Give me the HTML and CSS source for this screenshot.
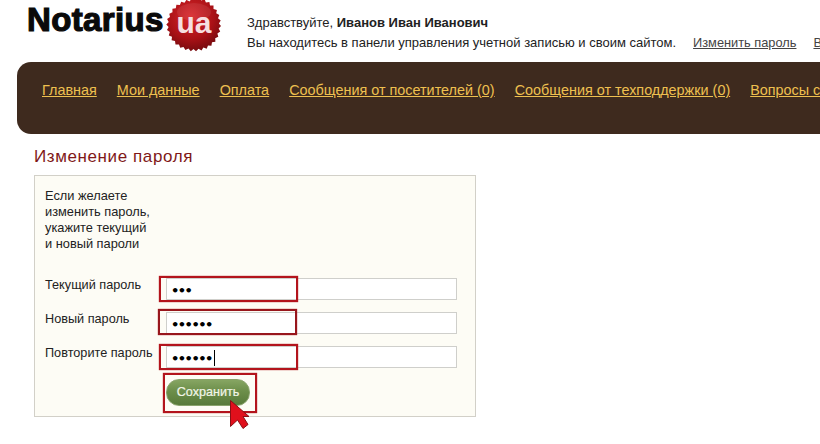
FILE: index.html
```html
<!DOCTYPE html>
<html lang="ru">
<head>
<meta charset="utf-8">
<title>Изменение пароля</title>
<link rel="stylesheet" href="styles.css">
</head>
<body>
<header class="top">
  <div class="logo">
    <span class="logo-word">Notarius</span>
    <div class="badge">
      <svg width="56" height="56" viewBox="0 0 56 56">
        <defs>
          <radialGradient id="seal" cx="45%" cy="35%" r="70%">
            <stop offset="0" stop-color="#d8262a"/>
            <stop offset="0.6" stop-color="#a91116"/>
            <stop offset="1" stop-color="#6d0a0e"/>
          </radialGradient>
        </defs>
        <polygon fill="url(#seal)" points="28,0 30.5,2.6 33.4,.5 35.3,3.5 38.6,2.2 39.9,5.5 43.4,4.9 44,8.4 47.5,8.5 47.5,12 50.9,12.9 50.2,16.3 53.3,17.9 52,21.2 54.7,23.4 52.9,26.4 55,29 52.6,31.4 54.2,34.4 51.4,36.4 52.3,39.8 49.2,41.2 49.4,44.7 46,45.3 45.4,48.8 42,48.5 40.7,51.7 37.4,50.6 35.5,53.5 32.5,51.8 30,54.3 27.5,52 24.8,54.2 22.5,51.4 19.4,52.9 17.5,50 14.2,50.8 13,47.5 9.5,47.5 9,44 5.6,43.3 6,39.8 2.8,38.4 3.8,35 1,33 2.6,30 .3,27.5 2.7,25 1.1,22 4,20 3.3,16.7 6.5,15.3 6.4,11.8 9.8,11.2 10.4,7.7 13.9,8 15.2,4.7 18.5,5.8 20.4,2.9 23.5,4.4 25.6,1.8"/>
        <ellipse cx="28" cy="15" rx="17" ry="9" fill="#fff" opacity=".08"/>
      </svg>
      <span class="badge-text">ua</span>
    </div>
  </div>
  <div class="greeting">
    <p class="greet-line">Здравствуйте, <b>Иванов Иван Иванович</b></p>
    <p class="greet-line greet-second">
      <span>Вы находитесь в панели управления учетной записью и своим сайтом.</span>
      <a class="user-link" href="#">Изменить пароль</a>
      <a class="user-link" href="#">В</a>
    </p>
  </div>
</header>

<nav class="nav">
  <a href="#">Главная</a>
  <a href="#">Мои данные</a>
  <a href="#">Оплата</a>
  <a href="#">Сообщения от посетителей (0)</a>
  <a href="#">Сообщения от техподдержки (0)</a>
  <a href="#">Вопросы с</a>
</nav>

<main class="content">
  <h1 class="title">Изменение пароля</h1>
  <form class="panel">
    <p class="hint">Если желаете<br>изменить пароль,<br>укажите текущий<br>и новый пароли</p>
    <div class="rows">
      <label class="row"><span class="label">Текущий пароль</span>
        <span class="field"><span class="dots">•••</span><i class="mark mark-a"></i></span></label>
      <label class="row"><span class="label">Новый пароль</span>
        <span class="field"><span class="dots">••••••</span><i class="mark mark-b"></i></span></label>
      <label class="row"><span class="label">Повторите пароль</span>
        <span class="field"><span class="dots">••••••</span><i class="caret"></i><i class="mark mark-a"></i></span></label>
    </div>
    <div class="actions">
      <div class="save-wrap">
        <button class="save" type="button">Сохранить</button>
        <i class="mark mark-save"></i>
        <svg class="cursor" width="20" height="30" viewBox="0 0 20 30">
          <path d="M.5 .5 L19 16.5 L13 16.5 L18 24.5 L13 28.5 L7.5 20 L.5 26.5 Z" fill="#e0101c" stroke="#8a1016" stroke-width="1"/>
        </svg>
      </div>
    </div>
  </form>
</main>
</body>
</html>
```
FILE: styles.css
```css
* { box-sizing: border-box; }
html, body { margin: 0; padding: 0; }
body {
  width: 820px;
  height: 444px;
  overflow: hidden;
  background: #fff;
  font-family: "Liberation Sans", Arial, sans-serif;
  color: #222;
}
.top {
  height: 62px;
  display: flex;
  white-space: nowrap;
}
.logo {
  flex: none;
  width: 247px;
  padding-left: 27px;
  display: flex;
  align-items: flex-start;
  position: relative;
}
.logo-word {
  font-size: 33px;
  line-height: 38px;
  margin-top: 1px;
  font-weight: bold;
  letter-spacing: .35px;
  color: #0a0a0a;
  -webkit-text-stroke: 1.2px #0a0a0a;
}
.badge {
  position: absolute;
  left: 166px;
  top: -3px;
  width: 56px;
  height: 56px;
}
.badge svg { display: block; }
.badge-text {
  position: absolute;
  left: 0;
  right: 0;
  top: 9px;
  text-align: center;
  font-size: 30px;
  line-height: 34px;
  font-weight: bold;
  color: #f6dfe0;
}
.greeting { padding-top: 13px; }
.greet-line {
  margin: 0;
  font-size: 13px;
  line-height: 20px;
}
.greet-second { display: flex; }
.user-link {
  color: #444;
  margin-left: 17px;
  font-size: 12.8px;
}
.nav {
  height: 72px;
  margin-left: 17px;
  padding: 19px 0 0 25px;
  background: #3e2a1e;
  border-radius: 14px 0 0 14px;
  display: flex;
  gap: 20px;
  white-space: nowrap;
  overflow: hidden;
}
.nav a {
  color: #eec050;
  font-size: 14.4px;
  line-height: 18px;
}
.content { padding: 13px 0 0 34px; }
.title {
  margin: 0 0 8px;
  font-size: 17px;
  line-height: 20px;
  font-weight: normal;
  letter-spacing: .6px;
  color: #801818;
}
.panel {
  width: 442px;
  height: 242px;
  padding: 12px 18px 0 10px;
  background: #fdfcf5;
  border: 1px solid #d2d0c8;
}
.hint {
  margin: 0;
  font-size: 12.8px;
  line-height: 16px;
  color: #222;
}
.rows {
  margin-top: 26px;
  display: flex;
  flex-direction: column;
  gap: 12px;
}
.row {
  display: grid;
  grid-template-columns: 121px 291px;
  height: 22px;
}
.label {
  font-size: 12.7px;
  line-height: 15px;
  color: #222;
}
.field {
  position: relative;
  display: block;
  height: 22px;
  background: #fff;
  border: 1px solid #cfcfcb;
  padding-left: 4px;
  font-size: 13px;
  line-height: 23px;
  font-family: "DejaVu Sans", sans-serif;
  color: #000;
}
.dots { letter-spacing: -1.5px; font-weight: bold; }
.caret {
  display: inline-block;
  width: 1px;
  height: 16px;
  margin-left: 2px;
  vertical-align: -3px;
  background: #000;
}
.mark {
  position: absolute;
  display: block;
  border: 2px solid #b3141c;
  box-shadow: 0 0 1px #b3141c;
  pointer-events: none;
}
.mark-a { left: -8px; top: -3px; width: 139px; height: 26px; }
.mark-b { left: -9px; top: -4px; width: 139px; height: 26px; border-color: #98161c; }
.actions { padding: 11px 0 0 121px; }
.save-wrap {
  position: relative;
  width: 84px;
  height: 27px;
}
.save {
  display: block;
  width: 84px;
  height: 27px;
  padding: 0;
  border: 1px solid #8aa36c;
  border-radius: 13px;
  background: linear-gradient(#86a562 0%, #6c8e4a 45%, #587a3a 100%);
  color: #f2f6e8;
  font: 12.6px/25px "Liberation Sans", Arial, sans-serif;
  -webkit-text-stroke: .2px #f2f6e8;
}
.mark-save { left: -3px; top: -6px; width: 94px; height: 40px; }
.cursor {
  position: absolute;
  left: 64px;
  top: 21px;
}
```
